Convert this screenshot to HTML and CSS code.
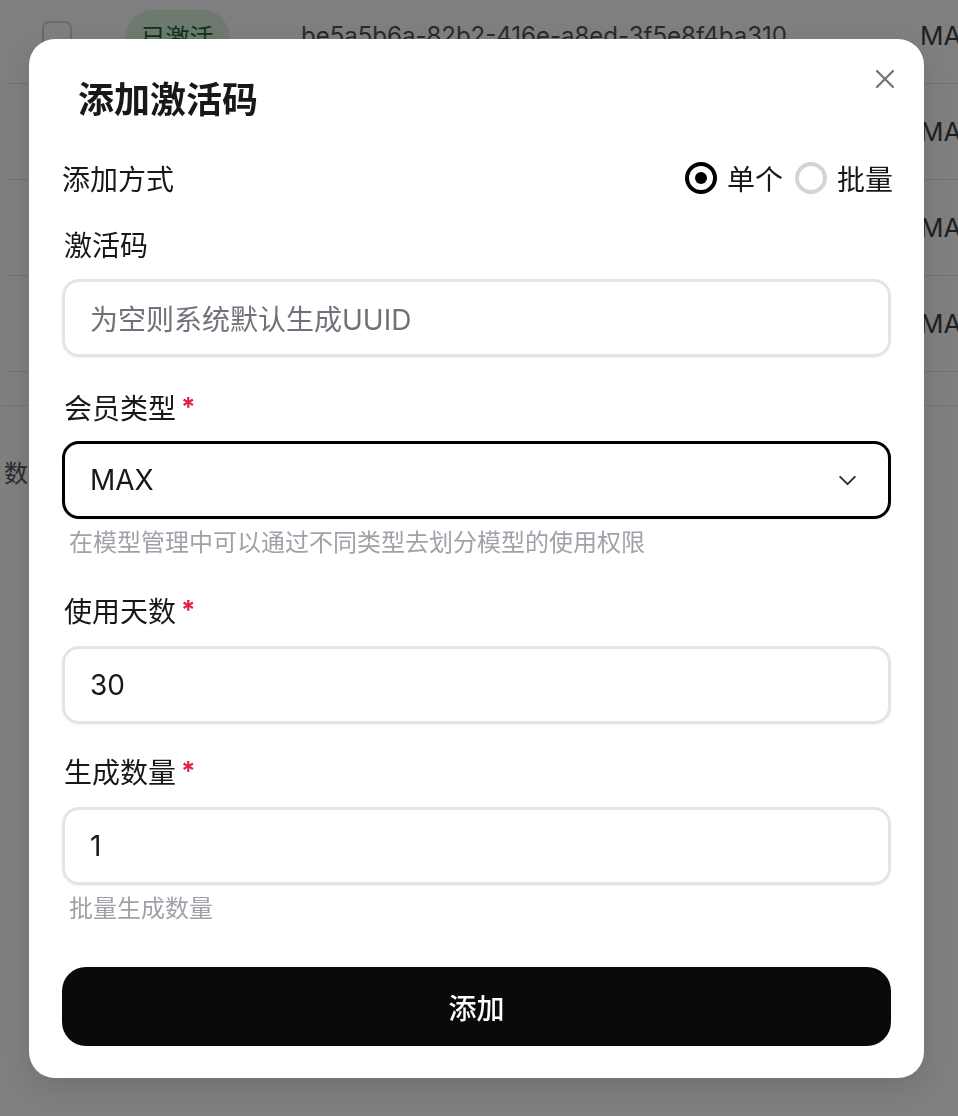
FILE: index.html
```html
<!DOCTYPE html>
<html lang="zh-CN">
<head>
<meta charset="utf-8">
<title>添加激活码</title>
<link rel="stylesheet" href="styles.css">
</head>
<body>
<div class="page">
  <div class="table">
    <div class="row">
      <span class="checkbox"></span>
      <span class="badge">已激活</span>
      <span class="code">be5a5b6a-82b2-416e-a8ed-3f5e8f4ba310</span>
      <span class="type">MAX</span>
    </div>
    <div class="row">
      <span class="checkbox"></span>
      <span class="badge">已激活</span>
      <span class="code">3c1f0e2a-71d4-4b8e-9a0c-5d2e7f1b6a42</span>
      <span class="type">MAX</span>
    </div>
    <div class="row">
      <span class="checkbox"></span>
      <span class="badge">已激活</span>
      <span class="code">8e4b2d7c-0a13-4f6e-b5d9-1c7a3e9f2b80</span>
      <span class="type">MAX</span>
    </div>
    <div class="row">
      <span class="checkbox"></span>
      <span class="badge">已激活</span>
      <span class="code">f29d6a1e-4c85-4b3a-8e07-6a2d9c4f1e53</span>
      <span class="type">MAX</span>
    </div>
    <div class="table-foot"></div>
  </div>
  <div class="pager">数</div>
</div>

<div class="overlay">
  <div class="modal">
    <button class="close" aria-label="关闭">
      <svg viewBox="0 0 20 20" width="20" height="20"><path d="M2 2 L18 18 M18 2 L2 18" stroke="currentColor" stroke-width="2.2" stroke-linecap="round" fill="none"/></svg>
    </button>
    <h2 class="title">添加激活码</h2>

    <div class="mode-row">
      <span class="mode-label">添加方式</span>
      <div class="radios">
        <label class="radio"><span class="dot checked"></span>单个</label>
        <label class="radio"><span class="dot"></span>批量</label>
      </div>
    </div>

    <div class="fields">
      <div class="field">
        <div class="label">激活码</div>
        <div class="input placeholder">为空则系统默认生成UUID</div>
      </div>
      <div class="field field-type">
        <div class="label">会员类型<span class="req">*</span></div>
        <div class="input select">
          <span>MAX</span>
          <svg class="chev" viewBox="0 0 20 12" width="19" height="11"><path d="M2 2 L10 10 L18 2" stroke="currentColor" stroke-width="2" fill="none" stroke-linecap="round" stroke-linejoin="round"/></svg>
        </div>
        <div class="help">在模型管理中可以通过不同类型去划分模型的使用权限</div>
      </div>
      <div class="field field-days">
        <div class="label">使用天数<span class="req">*</span></div>
        <div class="input">30</div>
      </div>
      <div class="field field-count">
        <div class="label">生成数量<span class="req">*</span></div>
        <div class="input">1</div>
        <div class="help">批量生成数量</div>
      </div>
    </div>

    <button class="submit">添加</button>
  </div>
</div>
</body>
</html>
```

FILE: styles.css
```css
* { box-sizing: border-box; }

html, body {
  margin: 0;
  padding: 0;
  width: 958px;
  height: 1116px;
  overflow: hidden;
  background: #ffffff;
  font-family: "Inter", "Noto Sans CJK SC", sans-serif;
  color: #18181b;
}

/* background page */
.page {
  width: 958px;
}

.table {
  margin-top: -12px;
  margin-left: 7px;
}

.row {
  height: 96px;
  border-bottom: 1px solid #e4e4e7;
  display: flex;
  align-items: center;
  white-space: nowrap;
  overflow: hidden;
}

.checkbox {
  width: 30px;
  height: 30px;
  border: 2px solid #d4d4d8;
  border-radius: 7px;
  margin-left: 35px;
  flex: none;
}

.badge {
  margin-left: 54px;
  height: 52px;
  width: 103px;
  border-radius: 26px;
  background: #dcf2de;
  color: #166534;
  font-size: 24px;
  display: flex;
  align-items: center;
  justify-content: center;
  flex: none;
}

.code {
  margin-left: 72px;
  font-size: 24px;
  color: #52525b;
  width: 619px;
  flex: none;
}

.type {
  font-size: 26px;
  color: #3f3f46;
}

.table-foot {
  height: 34px;
  border-bottom: 1px solid #e4e4e7;
  margin-left: -7px;
}

.pager {
  margin-top: 48px;
  padding-left: 4px;
  font-size: 24px;
  color: #52525b;
}

/* overlay + modal */
.overlay {
  position: fixed;
  inset: 0;
  background: rgba(0, 0, 0, 0.5);
  display: flex;
  align-items: flex-start;
  padding-top: 39px;
  padding-left: 29px;
}

.modal {
  position: relative;
  width: 895px;
  background: #ffffff;
  border-radius: 26px;
  padding: 32px 33px 32px 33px;
  box-shadow: 0 10px 30px rgba(0, 0, 0, 0.12);
}

.close {
  position: absolute;
  top: 30px;
  right: 29px;
  width: 20px;
  height: 20px;
  padding: 0;
  border: none;
  background: none;
  color: #71717a;
  display: block;
}
.close svg { display: block; }

.title {
  margin: 0;
  padding: 5px 0 0 16px;
  font-size: 36px;
  line-height: 48px;
  font-weight: 700;
  color: #18181b;
}

.mode-row {
  margin-top: 34px;
  height: 40px;
  display: flex;
  align-items: center;
  justify-content: space-between;
  font-size: 28px;
}

.mode-label {
  color: #18181b;
}

.radios {
  display: flex;
  align-items: center;
  gap: 12px;
  margin-right: -2px;
}

.radio {
  display: flex;
  align-items: center;
  gap: 10px;
  font-size: 28px;
  color: #18181b;
}

.dot {
  width: 32px;
  height: 32px;
  border-radius: 50%;
  border: 4px solid #d4d4d8;
  display: flex;
  align-items: center;
  justify-content: center;
}

.dot.checked {
  border-color: #000000;
}
.dot.checked::after {
  content: "";
  width: 12px;
  height: 12px;
  border-radius: 50%;
  background: #000000;
}

.fields {
  margin-top: 28px;
  display: flex;
  flex-direction: column;
  gap: 31px;
}

.field {
  display: flex;
  flex-direction: column;
}

.field-type { margin-top: 1px; }
.field-days { margin-top: 2px; }
.field-count { margin-top: -2px; }

.label {
  height: 40px;
  line-height: 40px;
  font-size: 28px;
  padding-left: 2px;
  color: #18181b;
  display: flex;
  align-items: center;
}

.req {
  color: #e11d48;
  font-size: 26px;
  font-weight: 700;
  margin-left: 5px;
  margin-top: -4px;
}

.input {
  margin-top: 14px;
  height: 78px;
  border: 3px solid #e4e4e7;
  border-radius: 17px;
  padding: 0 25px;
  display: flex;
  align-items: center;
  font-size: 28px;
  color: #18181b;
  box-shadow: 0 1px 2px rgba(0, 0, 0, 0.06);
}

.field:first-child .input { margin-top: 13px; }

.input.placeholder {
  color: #71717a;
}

.input.select {
  margin-top: 12px;
  border-color: #000000;
  justify-content: space-between;
  padding-right: 31px;
}

.chev {
  color: #27272a;
  display: block;
}

.help {
  margin-top: 8px;
  height: 32px;
  line-height: 32px;
  font-size: 24px;
  padding-left: 7px;
  color: #a1a1aa;
}

.submit {
  margin-top: 42px;
  width: 100%;
  height: 79px;
  border: none;
  border-radius: 24px;
  background: #0a0a0a;
  color: #ffffff;
  font-family: "Inter", "Noto Sans CJK SC", sans-serif;
  font-size: 28px;
  font-weight: 500;
  display: block;
}
```
